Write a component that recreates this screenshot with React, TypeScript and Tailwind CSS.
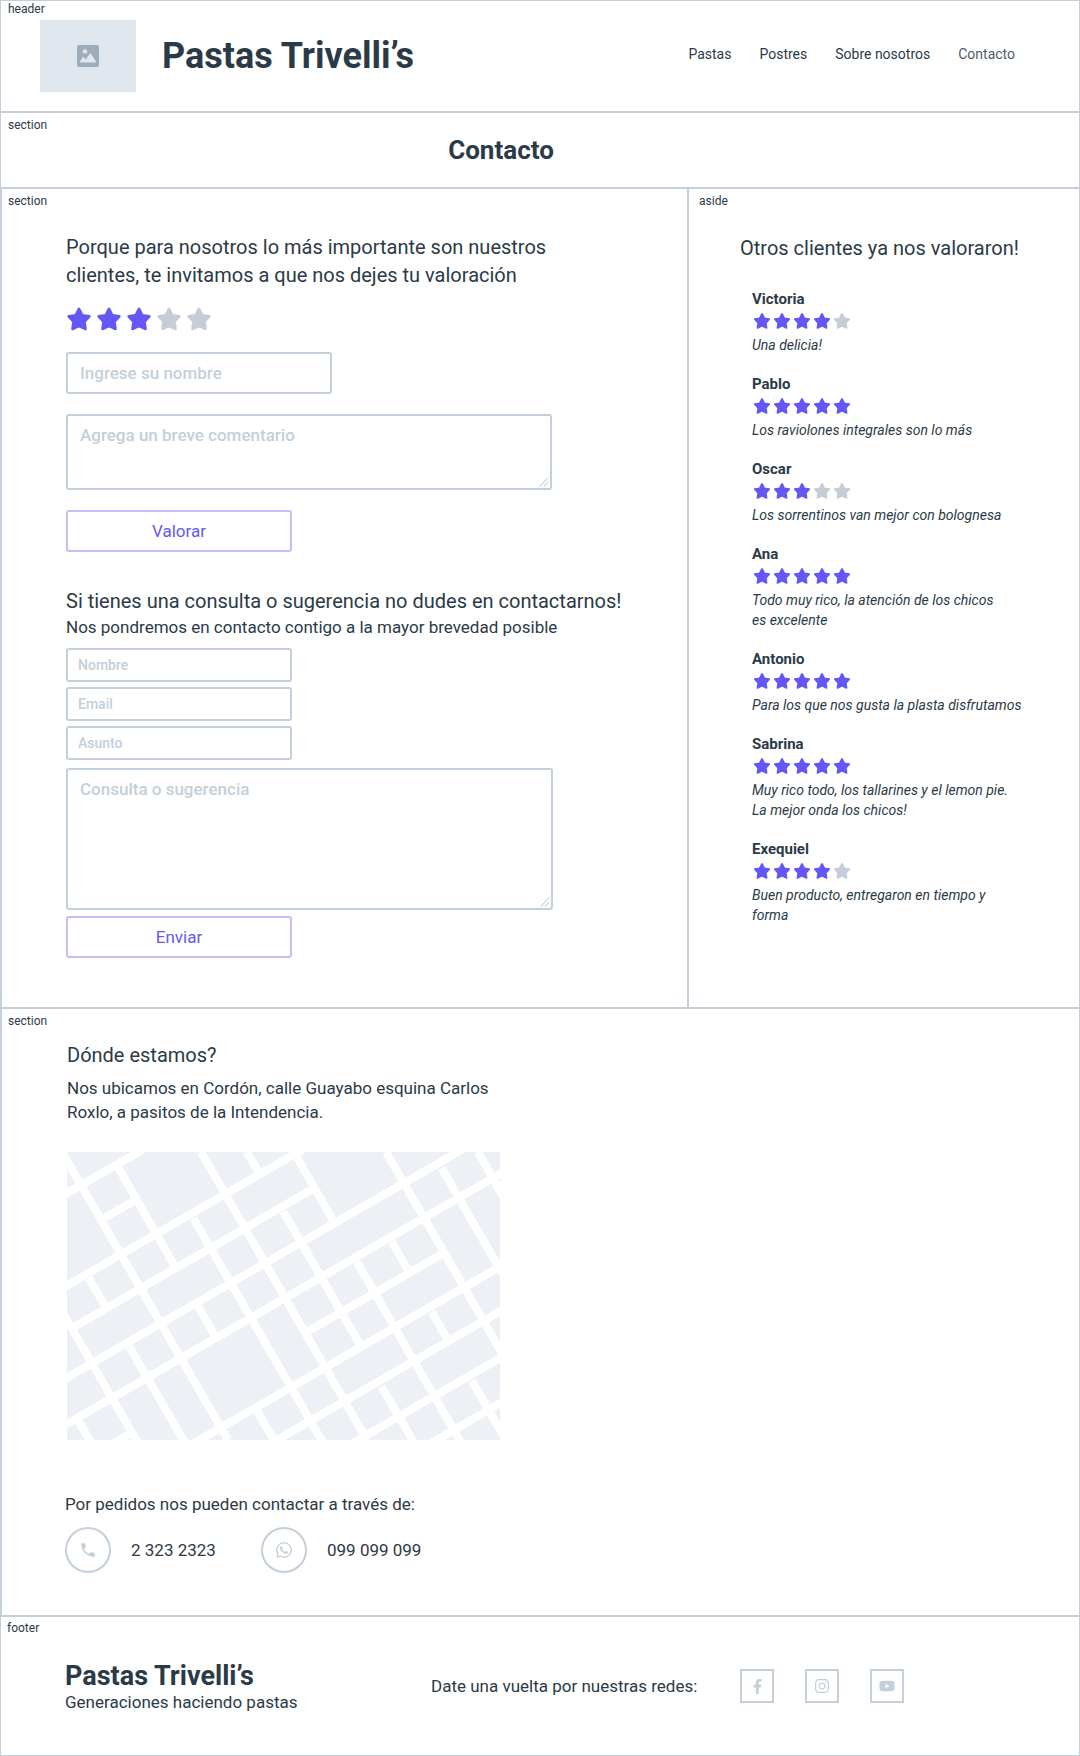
import { useState } from 'react';
import type { ReactNode } from 'react';
import { FaFacebookF, FaInstagram, FaYoutube, FaWhatsapp } from 'react-icons/fa';
import { MdPhone } from 'react-icons/md';

const STAR = 'M12 2.6 L15.1 8.6 L21.6 9.6 L17.1 14.4 L18 21.2 L12 18.4 L6 21.2 L6.9 14.4 L2.4 9.6 L8.9 8.6 Z';

function Star({ on, className }: { on: boolean; className: string }) {
  return (
    <svg viewBox="0 0 24 24" aria-hidden="true" className={`${className} ${on ? 'text-[#6557f5]' : 'text-[#c5cdd7]'}`}>
      <path d={STAR} fill="currentColor" stroke="currentColor" strokeWidth="2.4" strokeLinejoin="round" />
    </svg>
  );
}

function Tag({ children, className = '' }: { children: ReactNode; className?: string }) {
  return <p className={`text-xs leading-4 ${className}`}>{children}</p>;
}

const reviews = [
  { name: 'Victoria', stars: 4, text: 'Una delicia!' },
  { name: 'Pablo', stars: 5, text: 'Los raviolones integrales son lo más' },
  { name: 'Oscar', stars: 3, text: 'Los sorrentinos van mejor con bolognesa' },
  { name: 'Ana', stars: 5, text: 'Todo muy rico, la atención de los chicos\nes excelente' },
  { name: 'Antonio', stars: 5, text: 'Para los que nos gusta la plasta disfrutamos' },
  { name: 'Sabrina', stars: 5, text: 'Muy rico todo, los tallarines y el lemon pie.\nLa mejor onda los chicos!' },
  { name: 'Exequiel', stars: 4, text: 'Buen producto, entregaron en tiempo y\nforma' },
];

const streets = [
  'M36 36L534 900', 'M205 83L373 376', 'M453 36L951 900', 'M590 36L625 96', 'M740 50L848 240',
  'M430 235L820 910', 'M700 215L928 610', 'M1008 36L1368 660', 'M1283 36L1365 178', 'M1175 85L1357 400',
  'M920 365L1238 916', 'M1025 305L1072 386', 'M1145 515L1192 597', 'M1265 722L1374 911', 'M995 740L1097 916',
  'M620 810L681 916', 'M45 530L268 916', 'M117 415L165 498', 'M238 620L409 916', 'M445 500L493 585',
  'M87 845L128 916',
  'M40 166L280 28', 'M165 233L250 184', 'M40 443L774 19', 'M68 563L790 146', 'M40 719L1248 22',
  'M40 858L1360 96', 'M772 575L1180 340', 'M421 916L1360 374', 'M653 916L1360 508', 'M907 910L1360 649',
  'M1132 916L1360 784', 'M190 911L240 882',
];

function CityMap() {
  return (
    <svg viewBox="51 36 1299 864" role="img" aria-label="Mapa de la zona" className="mt-7 block w-[433px] max-w-full">
      <rect x="51" y="36" width="1299" height="864" fill="#edf0f5" />
      <path d={streets.join('')} stroke="#fff" strokeWidth="24" fill="none" />
    </svg>
  );
}

function Grip() {
  return (
    <svg viewBox="0 0 10 10" aria-hidden="true" className="pointer-events-none absolute right-[3px] bottom-[3px] size-2.5 text-[#b3bfca]">
      <path d="M1 9.5L9 .5M5 9.5L9 5" stroke="currentColor" fill="none" />
    </svg>
  );
}

const field =
  'block rounded-[3px] border-2 border-[#c3cfda] bg-white font-medium text-[#2b3a47] placeholder:text-[#c3cfda] placeholder:opacity-100';
const smallInput = `${field} h-[34px] w-[226px] max-w-full px-2.5 text-sm`;
const area = `${field} w-full resize-none px-3 py-[7px] text-[17px] leading-6`;
const action =
  'block h-[42px] w-[226px] max-w-full rounded-[3px] border-2 border-[#c5befb] bg-white text-center text-[17px] leading-6 text-[#6557f5]';
const round = 'flex size-[46px] items-center justify-center rounded-full border-2 border-[#c3cfda] text-[#c3cfda]';
const square = 'flex size-[34px] items-center justify-center border-2 border-[#c3cfda] text-[#c3cfda]';

function RatingForm() {
  const [rating, setRating] = useState(3);
  return (
    <form onSubmit={(e) => e.preventDefault()}>
      <fieldset>
        <legend className="max-w-[510px] text-xl leading-7">
          Porque para nosotros lo más importante son nuestros clientes, te invitamos a que nos dejes tu valoración
        </legend>
        <div className="mt-[17px] flex gap-1">
          {[1, 2, 3, 4, 5].map((n) => (
            <label key={n} className="relative cursor-pointer">
              <input type="radio" name="rating" value={n} checked={rating === n} onChange={() => setRating(n)} aria-label={`${n} estrellas`} className="sr-only" />
              <Star on={n <= rating} className="block size-[26px]" />
            </label>
          ))}
        </div>
      </fieldset>
      <div className="mt-5 flex flex-col gap-5">
        <input aria-label="Ingrese su nombre" placeholder="Ingrese su nombre" className={`${field} h-[42px] w-[266px] max-w-full px-3 text-[17px]`} />
        <div className="relative flex w-[486px] max-w-full">
          <textarea aria-label="Agrega un breve comentario" placeholder="Agrega un breve comentario" className={`${area} h-[76px]`} />
          <Grip />
        </div>
        <button className={action}>Valorar</button>
      </div>
    </form>
  );
}

function ContactForm() {
  return (
    <form className="mt-[35px]" onSubmit={(e) => e.preventDefault()}>
      <h3 className="text-xl leading-7">Si tienes una consulta o sugerencia no dudes en contactarnos!</h3>
      <p className="text-[17px] leading-6">Nos pondremos en contacto contigo a la mayor brevedad posible</p>
      <div className="mt-[9px] flex flex-col gap-[5px]">
        <input aria-label="Nombre" placeholder="Nombre" className={smallInput} />
        <input aria-label="Email" type="email" placeholder="Email" className={smallInput} />
        <input aria-label="Asunto" placeholder="Asunto" className={smallInput} />
      </div>
      <div className="relative mt-2 flex w-[487px] max-w-full">
        <textarea aria-label="Consulta o sugerencia" placeholder="Consulta o sugerencia" className={`${area} h-[142px]`} />
        <Grip />
      </div>
      <button className={`${action} mt-1.5`}>Enviar</button>
    </form>
  );
}

export default function App() {
  return (
    <div className="border border-[#c3cfda] bg-white font-['Roboto',sans-serif] text-[#2b3a47]">
      <header className="border-b-2 border-[#c3cfda] pb-[19px]">
        <Tag className="pl-[7px]">header</Tag>
        <div className="mt-[3px] flex items-center pr-16 pl-[39px]">
          <div className="flex h-[72px] w-24 items-center justify-center bg-[#dfe6ed]">
            <svg viewBox="0 0 22 22" role="img" aria-label="Logo" className="size-[22px]">
              <rect width="22" height="22" rx="2" fill="#9eadb9" />
              <circle cx="8" cy="6.5" r="2.3" fill="#dfe6ed" />
              <path d="M2.5 17.5L6 11.5L8.5 14.5L13.5 8L19.5 17.5Z" fill="#dfe6ed" />
            </svg>
          </div>
          <h1 className="ml-[26px] text-4xl font-bold">Pastas Trivelli’s</h1>
          <nav className="ml-auto flex gap-7 pb-1 text-sm">
            <a href="#pastas">Pastas</a>
            <a href="#postres">Postres</a>
            <a href="#nosotros">Sobre nosotros</a>
            <a href="#contacto" className="text-[#4f5c69]">Contacto</a>
          </nav>
        </div>
      </header>

      <section className="border-b-2 border-[#c3cfda] pt-1 pb-[21px]">
        <Tag className="pl-[7px]">section</Tag>
        <h2 className="mt-px pr-[78px] text-center text-[26px] leading-8 font-bold">Contacto</h2>
      </section>

      <div className="border-l border-[#c3cfda]">
        <div className="grid grid-cols-[687fr_390fr] border-b-2 border-[#c3cfda]">
          <section className="border-r-2 border-[#c3cfda] pt-1 pb-[49px]">
            <Tag className="pl-1.5">section</Tag>
            <div className="mt-6 pl-16">
              <RatingForm />
              <ContactForm />
            </div>
          </section>

          <aside className="pt-1">
            <Tag className="pl-2.5">aside</Tag>
            <h3 className="mt-[25px] pl-[51px] text-xl leading-7">Otros clientes ya nos valoraron!</h3>
            <ul className="mt-[27px] flex flex-col gap-[19px] pl-[63px]">
              {reviews.map((r) => (
                <li key={r.name}>
                  <h4 className="text-[15px] leading-5 font-bold">{r.name}</h4>
                  <div role="img" aria-label={`${r.stars} de 5 estrellas`} className="mt-[3px] flex gap-0.5 pl-px">
                    {[1, 2, 3, 4, 5].map((n) => (
                      <Star key={n} on={n <= r.stars} className="block size-[18px]" />
                    ))}
                  </div>
                  <p className="mt-[5px] text-sm leading-5 whitespace-pre-line italic">{r.text}</p>
                </li>
              ))}
            </ul>
          </aside>
        </div>

        <section className="border-b-2 border-[#c3cfda] pt-1 pb-[42px]">
          <Tag className="pl-1.5">section</Tag>
          <div className="mt-3 pl-[65px]">
            <h3 className="text-xl leading-7">Dónde estamos?</h3>
            <p className="mt-[7px] max-w-[440px] text-[17px] leading-6">
              Nos ubicamos en Cordón, calle Guayabo esquina Carlos Roxlo, a pasitos de la Intendencia.
            </p>
            <CityMap />
          </div>
          <div className="mt-[52px] pl-[63px] text-[17px] leading-6">
            <p>Por pedidos nos pueden contactar a través de:</p>
            <div className="mt-[11px] grid grid-cols-[196px_auto] justify-start">
              <a href="tel:23232323" className="flex items-center gap-5">
                <span className={round}><MdPhone className="size-[18px]" /></span>2 323 2323
              </a>
              <a href="tel:099099099" className="flex items-center gap-5">
                <span className={round}><FaWhatsapp className="size-[18px]" /></span>099 099 099
              </a>
            </div>
          </div>
        </section>
      </div>

      <footer className="pt-[3px] pb-[41px]">
        <Tag className="pl-1.5">footer</Tag>
        <div className="mt-[25px] grid grid-cols-[366px_309px_auto] justify-start pl-16">
          <div>
            <p className="text-[27px] leading-[30px] font-bold">Pastas Trivelli’s</p>
            <p className="text-[17px] leading-[23px]">Generaciones haciendo pastas</p>
          </div>
          <p className="mt-2 text-[17px] leading-[34px]">Date una vuelta por nuestras redes:</p>
          <div className="mt-2 flex gap-[31px]">
            <a href="#facebook" aria-label="Facebook" className={square}><FaFacebookF className="size-[15px]" /></a>
            <a href="#instagram" aria-label="Instagram" className={square}><FaInstagram className="size-4" /></a>
            <a href="#youtube" aria-label="YouTube" className={square}><FaYoutube className="size-4" /></a>
          </div>
        </div>
      </footer>
    </div>
  );
}
